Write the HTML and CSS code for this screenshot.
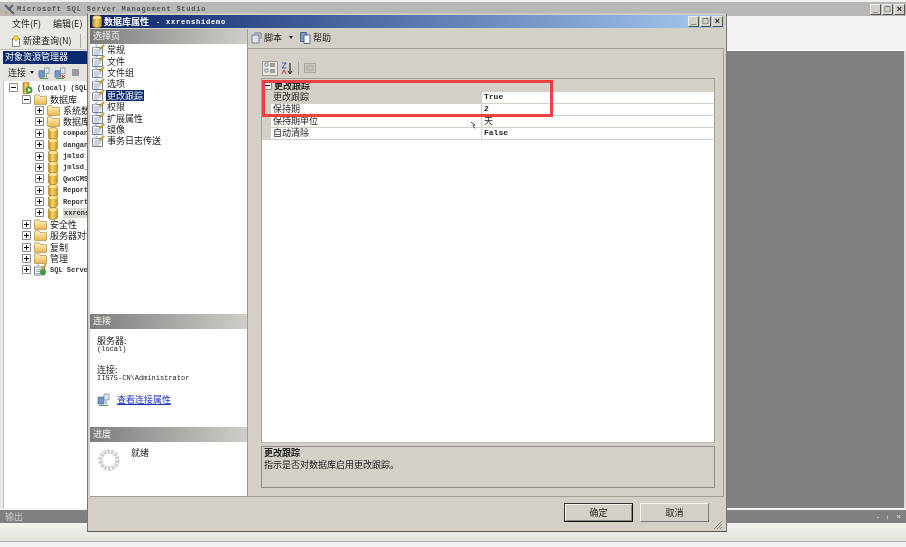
FILE: index.html
```html
<!DOCTYPE html>
<html lang="zh">
<head>
<meta charset="utf-8">
<title>数据库属性</title>
<link rel="stylesheet" href="styles.css">
</head>
<body>
<svg class="defs" width="0" height="0" aria-hidden="true">
  <defs>
    <linearGradient id="gold" x1="0" x2="1" y1="0" y2="0"><stop offset="0" stop-color="#b98a1c"/><stop offset=".45" stop-color="#f6d36a"/><stop offset="1" stop-color="#c8941f"/></linearGradient>
    <linearGradient id="fold" x1="0" x2="0" y1="0" y2="1"><stop offset="0" stop-color="#fff4c4"/><stop offset="1" stop-color="#e8b648"/></linearGradient>
    <symbol id="db" viewBox="0 0 10 13"><path d="M.5 2.500C.5 1 2.500.5 5 .5s4.500.5 4.500 2v8c0 1.500-2 2-4.500 2s-4.500-.5-4.500-2z" fill="url(#gold)" stroke="#a87a18" stroke-width=".6"/><ellipse cx="5" cy="2.500" rx="4" ry="1.500" fill="#fbe59a"/></symbol>
    <symbol id="folder" viewBox="0 0 13 11"><path d="M.5 2V10c0 .4.300.6.600.6h10.800c.3 0 .6-.2.600-.6V3c0-.4-.3-.6-.6-.6H6L5 .8H1.100C.8.800.5 1.200.5 2z" fill="url(#fold)" stroke="#a98a4a" stroke-width=".7"/></symbol>
    <symbol id="page" viewBox="0 0 13 12"><path d="M.5 3.500h10v8h-10z" fill="#fff" stroke="#6d7f96"/><path d="M2 6h7M2 8h7M2 10h5" stroke="#7d8ea5" stroke-width=".8"/><path d="M1 4l3-3h2l-2 3z" fill="#b6bfcc"/><path d="M7 4.500L11.500 .5l1 1L9 5.500z" fill="#d9a92e" stroke="#8a6a12" stroke-width=".4"/></symbol>
    <symbol id="plus" viewBox="0 0 9 9"><path d="M.5.500h8v8h-8z" fill="#fff" stroke="#8b8b8b"/><path d="M2 4.500h5M4.500 2v5" stroke="#111"/></symbol>
    <symbol id="minus" viewBox="0 0 9 9"><path d="M.5.500h8v8h-8z" fill="#fff" stroke="#8b8b8b"/><path d="M2 4.500h5" stroke="#111"/></symbol>
    <symbol id="server" viewBox="0 0 13 13"><path d="M1 4h6v7H1z" fill="#6f96cf" stroke="#3c5f98" stroke-width=".6"/><path d="M7 1h5v6H7z" fill="#dfe8f4" stroke="#6d7f96" stroke-width=".7"/><path d="M2 12.500h9" stroke="#4aa04a" stroke-width="1.200"/><path d="M9 8v3" stroke="#4aa04a"/></symbol>
  </defs>
</svg>
<div class="desktop">
  <div class="app">
    <div class="app-edge"></div>
    <div class="app-title">
      <svg class="app-logo" viewBox="0 0 11 11" width="11" height="11"><path d="M1 1l9 9M9 1L4 6" stroke="#5b6470" stroke-width="2"/><path d="M1 8l2 2" stroke="#c9a23a" stroke-width="2"/></svg>
      <span class="app-name">Microsoft SQL Server Management Studio</span>
      <span class="win-btns"><i class="wb">_</i><i class="wb">□</i><i class="wb">×</i></span>
    </div>
    <div class="menubar"><span class="menu">文件(F)</span><span class="menu">编辑(E)</span></div>
    <div class="toolbar">
      <span class="new-query">
        <svg viewBox="0 0 10 12" width="10" height="12"><path d="M1.500 3.500h7v8h-7z" fill="#fff" stroke="#7c8796"/><circle cx="5" cy="3" r="2.500" fill="#f7d53d" stroke="#b08a18" stroke-width=".5"/></svg>
        新建查询(N)
      </span>
      <span class="tool-sep"></span>
    </div>
    <div class="workspace">
      <aside class="explorer">
        <div class="explorer-head">对象资源管理器</div>
        <div class="explorer-tools">
          <span>连接</span><i class="drop"></i>
          <svg class="srv" viewBox="0 0 13 13" width="12" height="12"><use href="#server"/></svg>
          <svg class="srv" viewBox="0 0 13 13" width="12" height="12"><use href="#server"/><path d="M8 9l4 3M12 9l-4 3" stroke="#d32"/></svg>
          <i class="stop"></i>
        </div>
        <div class="tree">
          <div class="row lv0"><svg class="box" width="9" height="9"><use href="#minus"/></svg><svg class="ic-srv" viewBox="0 0 11 13" width="11" height="13"><path d="M1 1.500h6v11H1z" fill="url(#gold)" stroke="#a87a18" stroke-width=".6"/><circle cx="7" cy="9" r="3.500" fill="#3f9f3f"/><path d="M6 7l3 2-3 2z" fill="#fff"/></svg><span class="lat">(local) (SQL</span></div>
          <div class="row lv1"><svg class="box" width="9" height="9"><use href="#minus"/></svg><svg class="ic-fold" width="13" height="11"><use href="#folder"/></svg><span class="cjk">数据库</span></div>
          <div class="row lv2"><svg class="box" width="9" height="9"><use href="#plus"/></svg><svg class="ic-fold" width="13" height="11"><use href="#folder"/></svg><span class="cjk">系统数</span></div>
          <div class="row lv2"><svg class="box" width="9" height="9"><use href="#plus"/></svg><svg class="ic-fold" width="13" height="11"><use href="#folder"/></svg><span class="cjk">数据库</span></div>
          <div class="row lv2"><svg class="box" width="9" height="9"><use href="#plus"/></svg><svg class="ic-db" width="10" height="13"><use href="#db"/></svg><span class="lat">compan</span></div>
          <div class="row lv2"><svg class="box" width="9" height="9"><use href="#plus"/></svg><svg class="ic-db" width="10" height="13"><use href="#db"/></svg><span class="lat">dangan</span></div>
          <div class="row lv2"><svg class="box" width="9" height="9"><use href="#plus"/></svg><svg class="ic-db" width="10" height="13"><use href="#db"/></svg><span class="lat">jmlsd</span></div>
          <div class="row lv2"><svg class="box" width="9" height="9"><use href="#plus"/></svg><svg class="ic-db" width="10" height="13"><use href="#db"/></svg><span class="lat">jmlsd_</span></div>
          <div class="row lv2"><svg class="box" width="9" height="9"><use href="#plus"/></svg><svg class="ic-db" width="10" height="13"><use href="#db"/></svg><span class="lat">QwxCMS</span></div>
          <div class="row lv2"><svg class="box" width="9" height="9"><use href="#plus"/></svg><svg class="ic-db" width="10" height="13"><use href="#db"/></svg><span class="lat">Report</span></div>
          <div class="row lv2"><svg class="box" width="9" height="9"><use href="#plus"/></svg><svg class="ic-db" width="10" height="13"><use href="#db"/></svg><span class="lat">Report</span></div>
          <div class="row lv2"><svg class="box" width="9" height="9"><use href="#plus"/></svg><svg class="ic-db" width="10" height="13"><use href="#db"/></svg><span class="lat picked">xxrens</span></div>
          <div class="row lv1"><svg class="box" width="9" height="9"><use href="#plus"/></svg><svg class="ic-fold" width="13" height="11"><use href="#folder"/></svg><span class="cjk">安全性</span></div>
          <div class="row lv1"><svg class="box" width="9" height="9"><use href="#plus"/></svg><svg class="ic-fold" width="13" height="11"><use href="#folder"/></svg><span class="cjk">服务器对象</span></div>
          <div class="row lv1"><svg class="box" width="9" height="9"><use href="#plus"/></svg><svg class="ic-fold" width="13" height="11"><use href="#folder"/></svg><span class="cjk">复制</span></div>
          <div class="row lv1"><svg class="box" width="9" height="9"><use href="#plus"/></svg><svg class="ic-fold" width="13" height="11"><use href="#folder"/></svg><span class="cjk">管理</span></div>
          <div class="row lv1"><svg class="box" width="9" height="9"><use href="#plus"/></svg><svg class="ic-fold" viewBox="0 0 13 13" width="13" height="13"><use href="#page"/><circle cx="9" cy="9" r="3" fill="#3f9f3f"/></svg><span class="lat">SQL Serve</span></div>
        </div>
      </aside>
      <main class="mdi"></main>
    </div>
    <div class="output">
      <div class="output-title"><span>输出</span><span class="output-btns"><i>-</i><i>ᛧ</i><i>×</i></span></div>
      <div class="output-body"></div>
    </div>
  </div>

  <section class="dialog">
    <header class="dlg-title">
      <svg class="dlg-icon" width="10" height="13"><use href="#db"/></svg>
      <span class="dlg-name">数据库属性</span><span class="dlg-sub">- xxrenshidemo</span>
      <span class="win-btns"><i class="wb">_</i><i class="wb">□</i><i class="wb">×</i></span>
    </header>
    <div class="dlg-main">
      <div class="nav">
        <div class="band">选择页</div>
        <ul class="pages">
          <li><svg width="13" height="12"><use href="#page"/></svg><span>常规</span></li>
          <li><svg width="13" height="12"><use href="#page"/></svg><span>文件</span></li>
          <li><svg width="13" height="12"><use href="#page"/></svg><span>文件组</span></li>
          <li><svg width="13" height="12"><use href="#page"/></svg><span>选项</span></li>
          <li><svg width="13" height="12"><use href="#page"/></svg><span class="on">更改跟踪</span></li>
          <li><svg width="13" height="12"><use href="#page"/></svg><span>权限</span></li>
          <li><svg width="13" height="12"><use href="#page"/></svg><span>扩展属性</span></li>
          <li><svg width="13" height="12"><use href="#page"/></svg><span>镜像</span></li>
          <li><svg width="13" height="12"><use href="#page"/></svg><span>事务日志传送</span></li>
        </ul>
        <div class="band">连接</div>
        <div class="conn">
          <div class="cjk-line">服务器:</div>
          <div class="mono-line">(local)</div>
          <div class="cjk-line gap">连接:</div>
          <div class="mono-line">IIS75-CN\Administrator</div>
          <div class="link-line"><svg width="13" height="13"><use href="#server"/></svg><a href="#">查看连接属性</a></div>
        </div>
        <div class="band">进度</div>
        <div class="progress">
          <svg width="22" height="22" viewBox="0 0 22 22"><circle cx="11" cy="11" r="8.500" fill="none" stroke="#d2d2d2" stroke-width="4.500" stroke-dasharray="3 .8"/></svg>
          <span>就绪</span>
        </div>
      </div>
      <div class="pane">
        <div class="pane-tools">
          <svg width="11" height="12" viewBox="0 0 11 12"><path d="M1 3h7v8H1z" fill="#dfe4ec" stroke="#6d7f96"/><path d="M3 1h7v6" fill="none" stroke="#6d7f96"/></svg><span>脚本</span>
          <i class="drop"></i>
          <svg class="help-ic" width="11" height="12" viewBox="0 0 11 12"><path d="M.5.500h6v9h-6z" fill="#7d9bc6" stroke="#4c6690"/><path d="M4 3h6v8.500H4z" fill="#fff" stroke="#4c6690"/></svg><span>帮助</span>
        </div>
        <div class="pane-body">
          <div class="grid-tools">
            <span class="tbtn"><svg width="12" height="12" viewBox="0 0 12 12"><path d="M1 1h3v3H1zM1 7h3v3H1z" fill="#fff" stroke="#5b6f8c" stroke-width=".8"/><path d="M6 2h5M6 4h5M6 8h5M6 10h5" stroke="#555"/></svg></span>
            <svg class="sort" width="12" height="13" viewBox="0 0 12 13"><path d="M9 1v10M7 9l2 3 2-3" stroke="#111" fill="none"/><path d="M1 1h4L1 6h4" stroke="#2f5fb5" fill="none"/><path d="M1 12l2-4 2 4" stroke="#c33" fill="none"/></svg>
            <span class="vsep"></span>
            <svg width="12" height="10" viewBox="0 0 12 10"><path d="M.5.500h11v9H.5z" fill="#c9c6bf" stroke="#a9a69f"/><path d="M3 3h6v4H3z" fill="none" stroke="#a9a69f"/></svg>
          </div>
          <div class="props">
            <div class="prop-head"><svg class="ph-box" width="9" height="9"><use href="#minus"/></svg><span>更改跟踪</span></div>
            <div class="prop sel"><span class="k">更改跟踪</span><span class="v">True</span></div>
            <div class="prop"><span class="k">保持期</span><span class="v">2</span></div>
            <div class="prop"><span class="k">保持期单位</span><span class="v cjkv">天</span></div>
            <div class="prop"><span class="k">自动清除</span><span class="v">False</span></div>
            <div class="prop-fill"></div>
          </div>
          <div class="describe"><b>更改跟踪</b><p>指示是否对数据库启用更改跟踪。</p></div>
        </div>
      </div>
    </div>
    <footer class="dlg-foot">
      <button class="btn default">确定</button><button class="btn">取消</button>
      <svg class="grip" width="10" height="10" viewBox="0 0 10 10"><path d="M9 1L1 9M9 4L4 9M9 7L7 9" stroke="#8a8780"/></svg>
    </footer>
  </section>

  <div class="highlight"></div>
  <svg class="cursor" width="7" height="9" viewBox="0 0 7 9"><path d="M1 1l4 3-2 .5 2 3" fill="none" stroke="#444"/></svg>
</div>
</body>
</html>
```

FILE: styles.css
```css
* { box-sizing: border-box; }
html, body { margin: 0; padding: 0; background: #fff; }
.defs { position: absolute; }
.desktop {
  position: relative; width: 906px; height: 547px; overflow: hidden;
  font-family: "Noto Sans CJK SC", "Liberation Sans", sans-serif; font-size: 9px; color: #222;
  filter: blur(.3px);
}
i { font-style: normal; }

/* back window */
.app { height: 547px; display: flex; flex-direction: column; background: #f3f2f0; }
.app-edge { height: 2px; background: #efefec; }
.app-title { height: 14px; background: #b9b8b6; display: flex; align-items: center; padding: 0 1px 0 4px; }
.app-logo { margin-right: 2px; }
.app-name { font: bold 7px "Liberation Mono", monospace; letter-spacing: .78px; color: #555; }
.win-btns { margin-left: auto; display: flex; gap: 1px; }
.wb { width: 11px; height: 11px; background: #d4d0c8; border: 1px solid; border-color: #eee #555 #555 #eee; font: bold 9px/8px "Liberation Sans", sans-serif; color: #222; text-align: center; }
.menubar { height: 16px; display: flex; align-items: center; gap: 12px; padding: 0 0 1px 12px; background: #e9e7e2; width: 250px; }
.toolbar { height: 18px; display: flex; align-items: center; gap: 8px; padding-left: 11px; background: #e9e7e2; width: 250px; border-bottom: 1px solid #bbb; }
.new-query { display: flex; align-items: center; gap: 2px; }
.tool-sep { width: 1px; height: 14px; background: #aaa; }
.workspace { flex: 1; display: flex; min-height: 0; }
.explorer { width: 250px; background: #fff; border-left: 3px solid #e9e7e2; display: flex; flex-direction: column; }
.explorer-head { height: 13px; margin-top: 1px; background: #0b2a6d; color: #fff; padding-left: 2px; line-height: 12px; }
.explorer-tools { height: 17px; display: flex; align-items: center; gap: 4px; padding-left: 5px; background: #e4e2dc; }
.drop { width: 0; height: 0; border: 2px solid transparent; border-top: 3px solid #222; border-bottom: 0; }
.stop { width: 7px; height: 7px; background: #9a9a9a; margin-left: 2px; }
.srv { flex: none; }
.tree { padding-top: 1px; flex: 1; border-left: 1px solid #c4c4c0; }
.row { height: 11.4px; display: flex; align-items: center; white-space: nowrap; overflow: visible; }
.row svg { flex: none; }
.lv0 { padding-left: 5px; }
.lv1 { padding-left: 18px; }
.lv2 { padding-left: 31px; }
.box { margin-right: 3px; }
.lv0 .box { margin-right: 4px; }
.ic-srv { margin-right: 4px; }
.ic-fold { margin-right: 3px; }
.ic-db { margin: 0 5px 0 1px; }
.lat { font: bold 7px "Liberation Mono", monospace; color: #333; }
.picked { background: #dcdad5; padding: 1px 3px 1px 1px; }
.mdi { flex: 1; background: #808080; border-right: 2px solid #ddd; border-top: 1px solid #fff; }
.output { height: 39px; display: flex; flex-direction: column; border-top: 2px solid #f2f2f2; }
.output-title { height: 13px; background: #808080; color: #c8c8c8; display: flex; justify-content: space-between; padding: 0 5px; line-height: 13px; }
.output-btns { font: bold 8px/13px "Liberation Sans", sans-serif; display: flex; gap: 6px; }
.output-body { height: 19px; background: linear-gradient(#f4f3f0, #e4e2dc); border-bottom: 1px solid #aaa; }

/* dialog */
.dialog {
  position: absolute; left: 87px; top: 13px; width: 640px; height: 519px;
  background: #d4d0c8; border: 1px solid; border-color: #c8c6bf #777 #555 #777;
  display: flex; flex-direction: column; padding: 1px 2px 0;
}
.dlg-title { height: 13px; flex: none; display: flex; align-items: center; padding: 0 1px 0 2px; background: linear-gradient(90deg, #0a246a, #a6caf0); color: #fff; }
.dlg-icon { margin-right: 2px; }
.dlg-name { font-weight: 700; font-size: 9px; margin-right: 7px; }
.dlg-sub { font: bold 7px "Liberation Mono", monospace; letter-spacing: .8px; }
.dlg-main { height: 468px; flex: none; display: flex; margin-top: 1px; border-bottom: 1px solid #a3a098; }
.nav { width: 158px; background: #fff; display: flex; flex-direction: column; border-right: 1px solid #999; }
.band { height: 15px; flex: none; background: linear-gradient(90deg, #7d7d7d, #d0cec8); color: #e4e2dc; padding-left: 3px; line-height: 14px; font-weight: 500; }
.pages { list-style: none; margin: 0; padding: 0 0 0 2px; height: 270px; flex: none; }
.pages li { height: 11.4px; display: flex; align-items: center; gap: 1px; white-space: nowrap; }
.pages li svg { flex: none; }
.pages li span { line-height: 11px; padding: 0 1px; }
.pages li .on { background: #0b2a6d; color: #fff; }
.conn { height: 98px; flex: none; padding: 7px 0 0 7px; line-height: 9px; }
.cjk-line { height: 9px; }
.cjk-line.gap { margin-top: 12px; }
.mono-line { font: 7px/8px "Liberation Mono", monospace; color: #222; }
.link-line { display: flex; align-items: center; gap: 7px; margin-top: 11px; }
.link-line a { color: #1a2fc0; text-decoration: underline; }
.progress { flex: 1; display: flex; align-items: flex-start; padding: 7px 0 0 8px; gap: 11px; }
.progress span { margin-top: -2px; line-height: 12px; }
.pane { flex: 1; display: flex; flex-direction: column; min-width: 0; }
.pane-tools { height: 20px; flex: none; display: flex; align-items: center; padding: 0 0 2px 3px; gap: 2px; border-bottom: 1px solid #a3a098; }
.pane-tools .drop { margin: 0 5px 0 5px; }
.pane-body { flex: 1; display: flex; flex-direction: column; padding: 11px 8px 7px 13px; border-right: 1px solid #a3a098; min-height: 0; }
.grid-tools { height: 16px; flex: none; display: flex; align-items: center; gap: 2px; padding-left: 1px; }
.tbtn { width: 16px; height: 15px; display: flex; align-items: center; justify-content: center; background: #e9e7e2; border: 1px solid #9a9a96; }
.sort { margin-left: 1px; }
.vsep { width: 1px; height: 13px; background: #a3a098; margin: 0 3px; }
.props { height: 365px; flex: none; margin-top: 2px; border: 1px solid #a3a098; border-bottom-color: #bbb; background: #fff; display: flex; flex-direction: column; }
.prop-head { height: 13px; flex: none; background: #d4d0c8; display: flex; align-items: center; font-weight: 700; color: #222; white-space: nowrap; }
.ph-box { flex: none; margin: 0 2px 0 1px; }
.prop { height: 12px; flex: none; display: flex; align-items: stretch; border-left: 9px solid #d4d0c8; border-bottom: 1px solid #d4d0c8; line-height: 10px; }
.prop .k { width: 211px; flex: none; padding-left: 2px; border-right: 1px solid #d4d0c8; white-space: nowrap; }
.prop.sel .k { background: #d4d0c8; }
.prop .v { padding-left: 2px; font: bold 8px/10px "Liberation Mono", monospace; }
.prop .cjkv { font: 9px/10px "Noto Sans CJK SC", sans-serif; }
.prop-fill { flex: 1; }
.describe { height: 42px; flex: none; margin-top: 3px; border: 1px solid #8f8c85; padding: 0 2px; line-height: 12px; }
.describe b { display: block; }
.describe p { margin: 0; }
.dlg-foot { flex: 1; position: relative; display: flex; align-items: flex-start; justify-content: flex-end; gap: 7px; padding: 6px 15px 0 0; }
.btn {
  width: 69px; height: 19px; padding: 0; margin: 0; background: #d4d0c8;
  font: 9px/15px "Noto Sans CJK SC", sans-serif; color: #222;
  border: 1px solid; border-color: #f6f5f2 #777 #777 #f6f5f2;
}
.btn.default { border-color: #333 #111 #111 #333; box-shadow: inset 1px 1px #f6f5f2, inset -1px -1px #888; }
.grip { position: absolute; right: 1px; bottom: 1px; }

/* overlays */
.highlight { position: absolute; left: 262px; top: 80px; width: 291px; height: 37px; border: 3px solid #f23f3f; }
.cursor { position: absolute; left: 470px; top: 121px; }
```
